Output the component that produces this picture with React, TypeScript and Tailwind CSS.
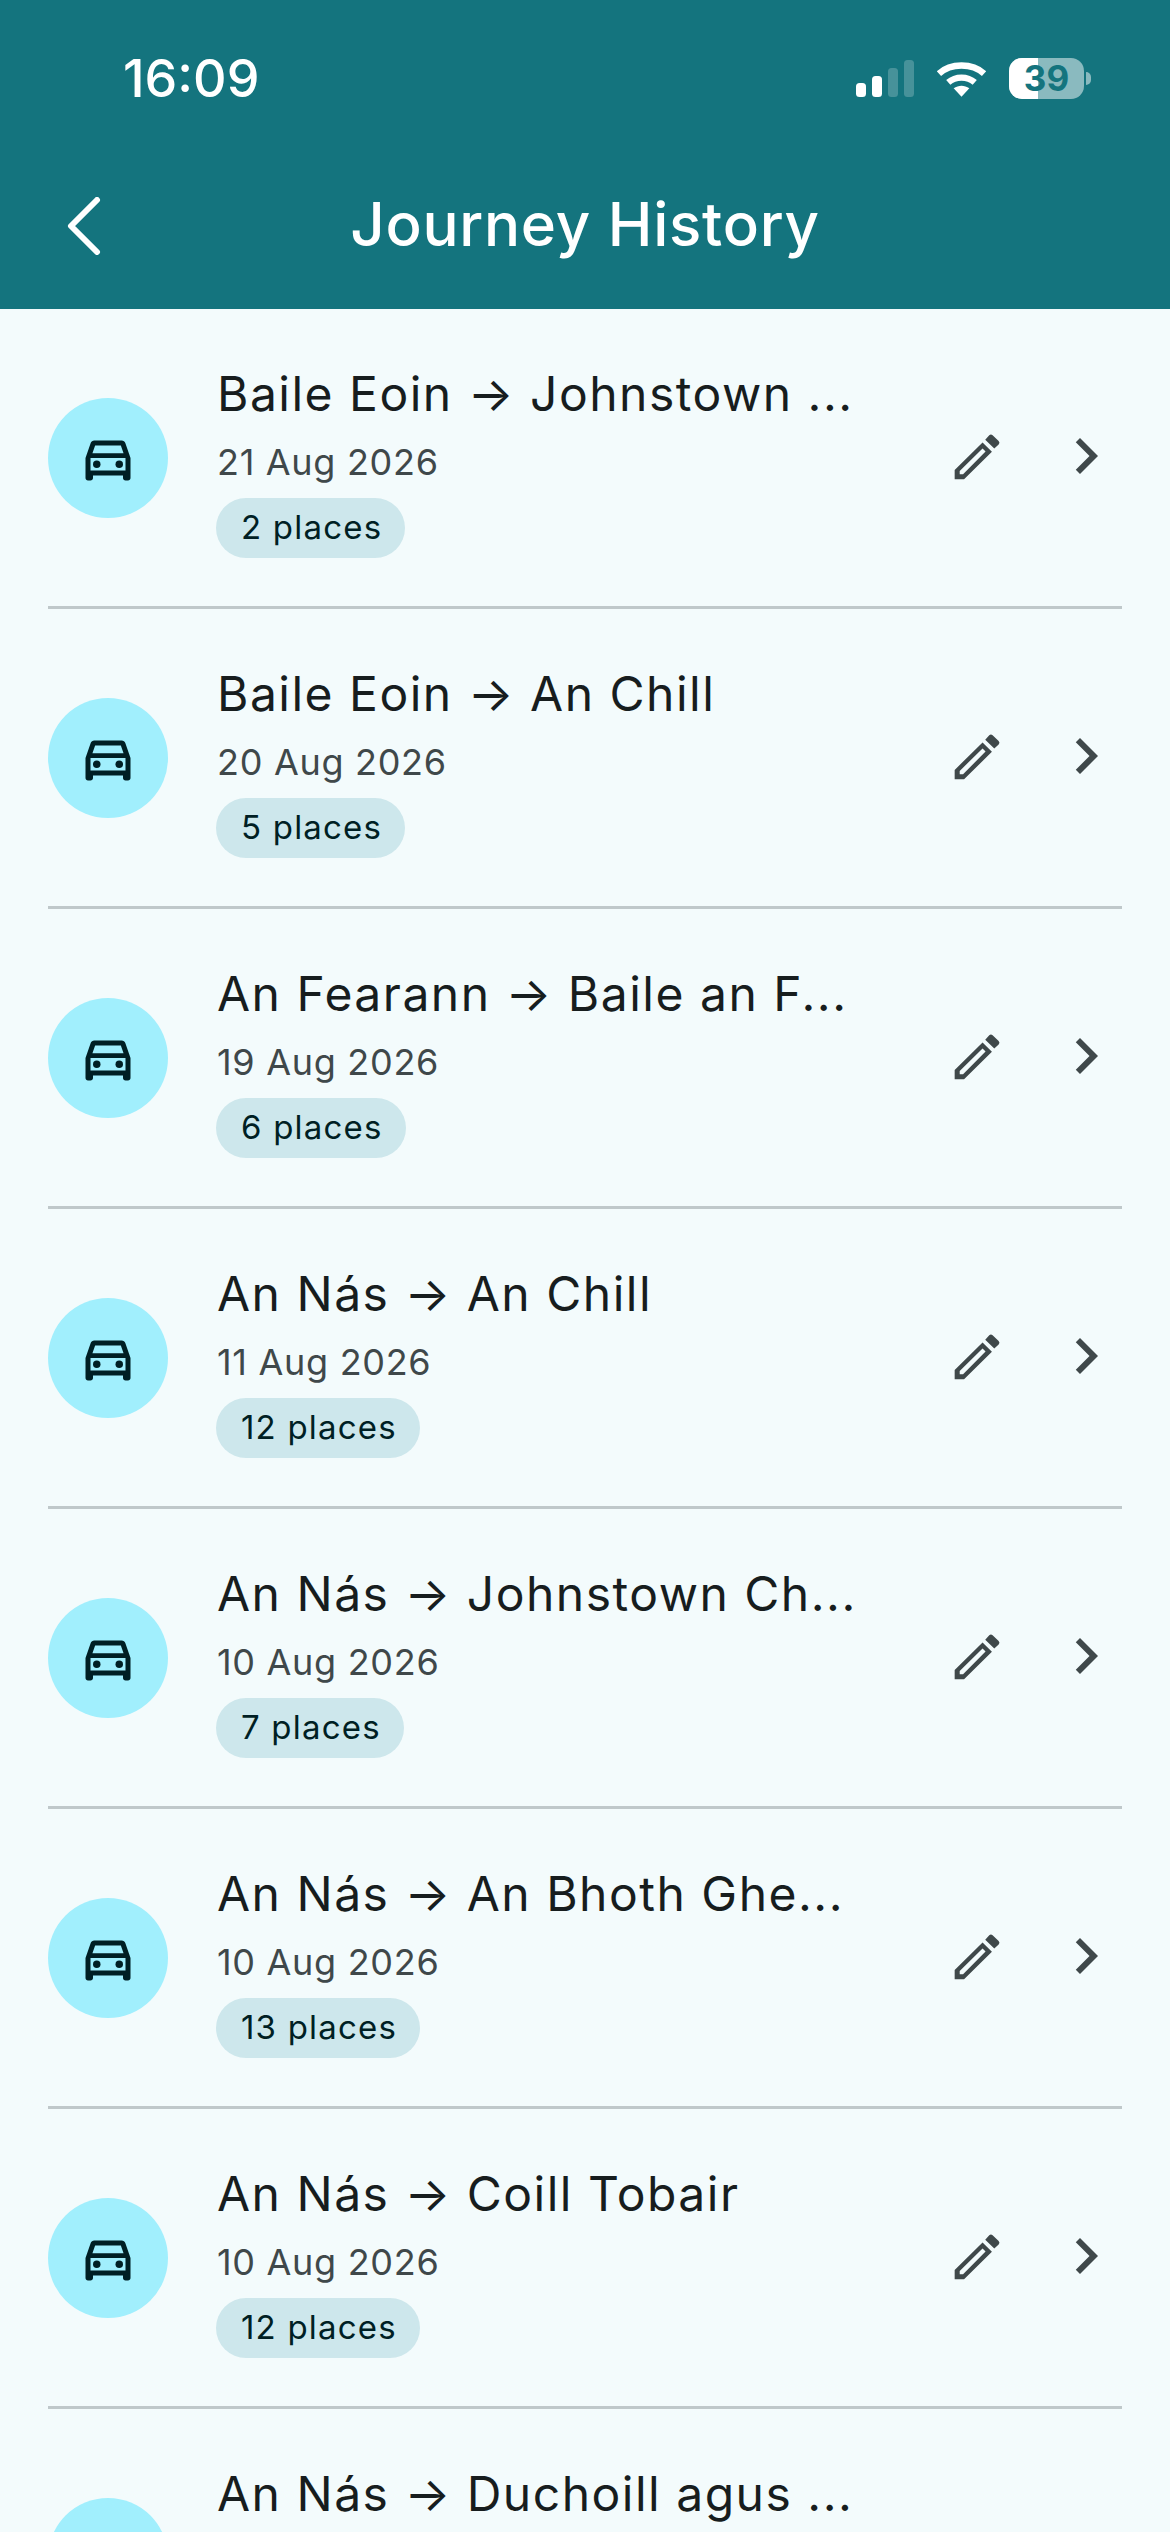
const journeys = [
  { title: "Baile Eoin → Johnstown ...", date: "21 Aug 2026", places: "2 places" },
  { title: "Baile Eoin → An Chill", date: "20 Aug 2026", places: "5 places" },
  { title: "An Fearann → Baile an F...", date: "19 Aug 2026", places: "6 places" },
  { title: "An Nás → An Chill", date: "11 Aug 2026", places: "12 places" },
  { title: "An Nás → Johnstown Ch...", date: "10 Aug 2026", places: "7 places" },
  { title: "An Nás → An Bhoth Ghe...", date: "10 Aug 2026", places: "13 places" },
  { title: "An Nás → Coill Tobair", date: "10 Aug 2026", places: "12 places" },
  { title: "An Nás → Duchoill agus ...", date: "10 Aug 2026", places: "9 places" },
];

const CarIcon = () => (
  <svg viewBox="0 0 24 24" className="w-[60px] h-[60px] fill-[#001f24]">
    <path d="M18.92 6.01C18.72 5.42 18.16 5 17.5 5h-11c-.66 0-1.21.42-1.42 1.01L3 12v8c0 .55.45 1 1 1h1c.55 0 1-.45 1-1v-1h12v1c0 .55.45 1 1 1h1c.55 0 1-.45 1-1v-8l-2.08-5.99zM6.85 7h10.29l1.08 3.11H5.77L6.85 7zM19 17H5v-5h14v5z" />
    <circle cx="7.5" cy="14.5" r="1.5" />
    <circle cx="16.5" cy="14.5" r="1.5" />
  </svg>
);

const PencilIcon = () => (
  <svg viewBox="105 100 140 140" className="w-[47px] h-[47px] fill-[#3f484a]">
    <path fillRule="evenodd" d="M107 210L190 128L218 156L135 238H107ZM122 213V223H132L199 155L190 146Z" />
    <path d="M198 120L210 107Q215 102 220 107L238 124Q243 129 238 134L225 146Z" />
  </svg>
);

const ChevronIcon = () => (
  <svg viewBox="0 0 24 24" className="w-[72px] h-[72px] fill-[#3f484a]">
    <path d="M10 6L8.59 7.41 13.17 12l-4.58 4.59L10 18l6-6z" />
  </svg>
);

const StatusBar = () => (
  <div className="h-[114px] flex items-end justify-between pl-[123px] pr-[79px] pb-[9px]">
    <span className="text-[52px] leading-[52px] font-medium text-white">16:09</span>
    <div className="flex items-center gap-[22px] h-[42px] mb-[6px]">
      {/* signal */}
      <svg viewBox="0 0 58 37" className="w-[58px] h-[37px]">
        <rect x="0" y="23" width="10" height="14" rx="3.5" fill="#fff" />
        <rect x="16" y="16" width="10" height="21" rx="3.5" fill="#fff" />
        <rect x="32" y="8" width="10" height="29" rx="3.5" fill="#fff" fillOpacity="0.22" />
        <rect x="48" y="0" width="10" height="37" rx="3.5" fill="#fff" fillOpacity="0.22" />
      </svg>
      {/* wifi */}
      <svg viewBox="0 0 52 37" className="w-[51px] h-[37px] fill-none stroke-white">
        <path d="M3 13.5C15 2.5 37 2.5 49 13.5" strokeWidth="6.5" />
        <path d="M12.5 22.5C20 16 32 16 39.5 22.5" strokeWidth="6.5" />
        <path d="M18 28.5L26 37L34 28.5C29 25 23 25 18 28.5Z" fill="#fff" stroke="none" />
      </svg>
      {/* battery */}
      <div className="flex items-center gap-[2px]">
        <div className="relative w-[75px] h-[41px] rounded-[13px] bg-white/50 overflow-hidden">
          <div className="h-full w-[29px] bg-white" />
          <span className="absolute inset-0 flex items-center justify-center text-[35px] leading-none font-bold text-[#14747e]">
            39
          </span>
        </div>
        <div className="w-[5px] h-[13px] rounded-r-full bg-white/50" />
      </div>
    </div>
  </div>
);

const Header = () => (
  <header className="bg-[#14747e]">
    <StatusBar />
    <div className="relative h-[195px] flex justify-center pt-[75px]">
      <svg viewBox="0 0 36 58" className="absolute left-[65px] top-[83px] w-[36px] h-[58px] fill-none stroke-white">
        <polyline points="32,3 6,29 32,55" strokeWidth="6" strokeLinecap="round" strokeLinejoin="round" />
      </svg>
      <h1 className="text-[60px] leading-[70px] font-medium text-white tracking-[0.75px]">Journey History</h1>
    </div>
  </header>
);

const Row = ({ title, date, places }: { title: string; date: string; places: string }) => (
  <li className="h-[300px] border-b-[3px] border-[#bfc8ca] flex items-center">
    <div className="w-[120px] h-[120px] rounded-full bg-[#a1effd] flex items-center justify-center shrink-0">
      <CarIcon />
    </div>
    <div className="flex-1 ml-[48px] min-w-0 flex flex-col items-start pt-[4px]">
      <div className="ml-[1px] text-[48px] leading-[66px] text-[#171d1e] tracking-[1.5px] whitespace-nowrap">{title}</div>
      <div className="ml-[1px] text-[36px] leading-[54px] text-[#3f484a] tracking-[0.7px] mt-[8px]">{date}</div>
      <div className="mt-[9px] h-[60px] pl-[25px] pr-[23px] rounded-full bg-[#cde7ec] flex items-center text-[33px] text-[#001f24] tracking-[1.2px]">
        {places}
      </div>
    </div>
    <div className="flex items-center gap-[49px] mt-[-3px]">
      <PencilIcon />
      <ChevronIcon />
    </div>
  </li>
);

export default function App() {
  return (
    <div className="w-[1170px] h-[2532px] overflow-hidden bg-[#f3fbfc] font-['Inter',sans-serif]">
      <Header />
      <ul className="px-[48px]">
        {journeys.map((j, i) => (
          <Row key={i} {...j} />
        ))}
      </ul>
    </div>
  );
}
